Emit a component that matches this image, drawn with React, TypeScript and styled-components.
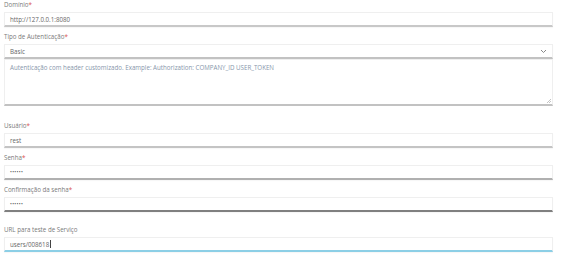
import React from "react";
import styled, { createGlobalStyle } from "styled-components";

const GlobalStyle = createGlobalStyle`
  body {
    margin: 0;
    background: #ffffff;
    font-family: "Open Sans", "Liberation Sans", sans-serif;
  }
`;

const Form = styled.form`
  width: 549px;
  padding: 1px 0 0 4px;
  display: flex;
  flex-direction: column;
`;

const Field = styled.div<{ $gap?: number }>`
  display: flex;
  flex-direction: column;
  margin-bottom: ${p => p.$gap ?? 6}px;
`;

const Label = styled.label`
  height: 8px;
  line-height: 8px;
  margin-bottom: 3px;
  font-size: 6.2px;
  color: #7a7a7a;
`;

const Required = styled.span`
  color: #d9534f;
`;

const Box = styled.div<{ $line: string }>`
  box-sizing: border-box;
  height: 15px;
  padding: 0 5px;
  display: flex;
  align-items: center;
  background: #ffffff;
  border: 1px solid #efefef;
  border-bottom: 2px solid ${p => p.$line};
  box-shadow: 0 1px 1px rgba(0, 0, 0, 0.03);
  font-size: 6.2px;
  color: #666666;
`;

const SelectBox = styled(Box)`
  justify-content: space-between;
`;

const Chevron = styled.svg`
  width: 7px;
  height: 5px;
`;

const Dots = styled.span`
  font-size: 5px;
  letter-spacing: 0.3px;
  color: #555;
`;

const Caret = styled.span`
  width: 1px;
  height: 8px;
  margin-left: 1px;
  background: #444;
`;

const TextArea = styled.div`
  box-sizing: border-box;
  height: 47px;
  padding: 4px 5px;
  position: relative;
  background: #ffffff;
  border: 1px solid #efefef;
  border-bottom: 2px solid #c2c2c2;
  font-size: 6.2px;
  line-height: 8px;
  color: #8796ab;
`;

const Grip = styled.svg`
  position: absolute;
  right: 1px;
  bottom: 1px;
  width: 5px;
  height: 5px;
`;

const App: React.FC = () => (
  <>
    <GlobalStyle />
    <Form>
      <Field>
        <Label>
          Domínio<Required>*</Required>
        </Label>
        <Box $line="#c8c8c8">http://127.0.0.1:8080</Box>
      </Field>
      <Field $gap={16}>
        <Label>
          Tipo de Autenticação<Required>*</Required>
        </Label>
        <SelectBox $line="#c2c2c2">
          Basic
          <Chevron viewBox="0 0 7 5">
            <path d="M1 1 L3.5 3.5 L6 1" fill="none" stroke="#888" strokeWidth="1" />
          </Chevron>
        </SelectBox>
        <TextArea>
          Autenticação com header customizado. Example: Authorization: COMPANY_ID USER_TOKEN
          <Grip viewBox="0 0 5 5">
            <path d="M1 5 L5 1 M3 5 L5 3" stroke="#aaa" strokeWidth="0.7" />
          </Grip>
        </TextArea>
      </Field>
      <Field>
        <Label>
          Usuário<Required>*</Required>
        </Label>
        <Box $line="#c4c4c4">rest</Box>
      </Field>
      <Field>
        <Label>
          Senha<Required>*</Required>
        </Label>
        <Box $line="#b0b0b0">
          <Dots>••••••</Dots>
        </Box>
      </Field>
      <Field $gap={14}>
        <Label>
          Confirmação da senha<Required>*</Required>
        </Label>
        <Box $line="#808080">
          <Dots>••••••</Dots>
        </Box>
      </Field>
      <Field>
        <Label>URL para teste de Serviço</Label>
        <Box $line="#8ccfe6">
          users/008618
          <Caret />
        </Box>
      </Field>
    </Form>
  </>
);

export default App;
